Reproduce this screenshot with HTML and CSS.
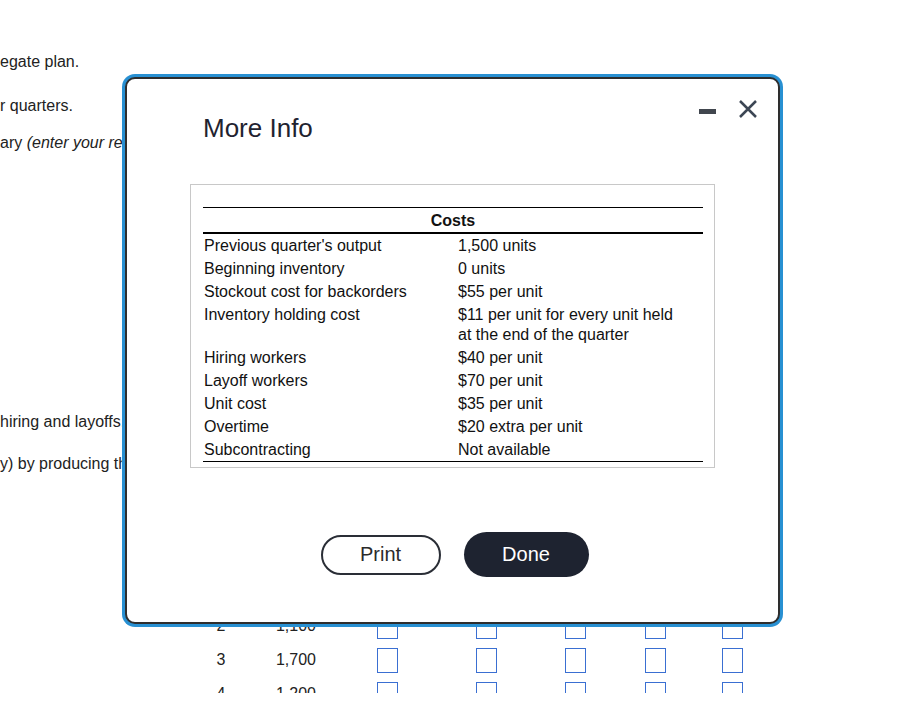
FILE: index.html
```html
<!DOCTYPE html>
<html lang="en">
<head>
<meta charset="utf-8">
<title>More Info</title>
<link rel="stylesheet" href="styles.css">
</head>
<body>
<div class="page">
  <div class="bg">
    <p class="l1">egate plan.</p>
    <p class="l2">r quarters.</p>
    <p class="l3">ary <i>(enter your responses as whole numbers)</i>.</p>
    <p class="l4">hiring and layoffs.</p>
    <p class="l5">y) by producing the demand in each quarter.</p>
    <div class="qrows">
      <div class="qrow"><span class="q">2</span><span class="d">1,100</span><span class="box c1"></span><span class="box c2"></span><span class="box c3"></span><span class="box c4"></span><span class="box c5"></span></div>
      <div class="qrow"><span class="q">3</span><span class="d">1,700</span><span class="box c1"></span><span class="box c2"></span><span class="box c3"></span><span class="box c4"></span><span class="box c5"></span></div>
      <div class="qrow"><span class="q">4</span><span class="d">1,200</span><span class="box c1"></span><span class="box c2"></span><span class="box c3"></span><span class="box c4"></span><span class="box c5"></span></div>
    </div>
  </div>

  <div class="dialog">
    <div class="dlg-head">
      <h2 class="title">More Info</h2>
      <div class="icons">
        <svg class="ico" width="18" height="18" viewBox="0 0 18 18"><rect x="0" y="9" width="17" height="5" fill="#41464e"/></svg>
        <svg class="ico" width="18" height="18" viewBox="0 0 18 18"><path d="M1 1 L17 17 M17 1 L1 17" stroke="#3c4654" stroke-width="2.5" fill="none"/></svg>
      </div>
    </div>
    <div class="info">
      <table class="costs">
        <thead>
          <tr><th colspan="2">Costs</th></tr>
        </thead>
        <tbody>
          <tr><td>Previous quarter's output</td><td>1,500 units</td></tr>
          <tr><td>Beginning inventory</td><td>0 units</td></tr>
          <tr><td>Stockout cost for backorders</td><td>$55 per unit</td></tr>
          <tr><td>Inventory holding cost</td><td>$11 per unit for every unit held<br>at the end of the quarter</td></tr>
          <tr><td>Hiring workers</td><td>$40 per unit</td></tr>
          <tr><td>Layoff workers</td><td>$70 per unit</td></tr>
          <tr><td>Unit cost</td><td>$35 per unit</td></tr>
          <tr><td>Overtime</td><td>$20 extra per unit</td></tr>
          <tr><td>Subcontracting</td><td>Not available</td></tr>
        </tbody>
      </table>
    </div>
    <div class="actions">
      <button class="btn print">Print</button>
      <button class="btn done">Done</button>
    </div>
  </div>
</div>
</body>
</html>
```

FILE: styles.css
```css
body {
  margin: 0;
  background: #fff;
  font-family: "Liberation Sans", Arial, sans-serif;
}

.page {
  position: relative;
  width: 910px;
  height: 693px;
  overflow: hidden;
}

.bg {
  padding-top: 52px;
}

.bg p {
  margin: 0;
  font-size: 16px;
  line-height: 20px;
  color: #222;
  white-space: nowrap;
}

.l2 { margin-top: 24px !important; }
.l3 { margin-top: 17px !important; }
.l4 { margin-top: 259px !important; }
.l5 { margin-top: 22px !important; }

.qrows {
  margin-top: 135px;
}

.qrow {
  display: flex;
  align-items: center;
  height: 34px;
  font-size: 16px;
  line-height: 20px;
  color: #222;
}

.q {
  width: 40px;
  margin-left: 201px;
  text-align: center;
}

.d {
  width: 75px;
  text-align: right;
}

.box {
  width: 21px;
  height: 25px;
  box-sizing: border-box;
  border: 1.5px solid #3a6fd2;
}

.c1 { margin-left: 61px; }
.c2 { margin-left: 78px; }
.c3 { margin-left: 68px; }
.c4 { margin-left: 59px; }
.c5 { margin-left: 56px; }

.dialog {
  position: absolute;
  left: 125px;
  top: 77px;
  width: 655px;
  height: 547px;
  box-sizing: border-box;
  border: 2px solid #2e2e2e;
  border-radius: 10px;
  box-shadow: 0 0 0 3px #2890d2;
  background: #fff;
  display: flex;
  flex-direction: column;
}

.dlg-head {
  display: flex;
  justify-content: space-between;
  align-items: flex-start;
  padding: 21px 21px 0 76px;
}

.title {
  margin: 13px 0 0;
  font-size: 26px;
  line-height: 30px;
  font-weight: normal;
  color: #1f2330;
}

.icons {
  display: flex;
  gap: 22px;
}

.ico {
  display: block;
}

.info {
  margin: 41px 0 0 63px;
  width: 525px;
  height: 284px;
  box-sizing: border-box;
  border: 1px solid #c8c8c8;
  padding: 22px 11px 0 12px;
}

.costs {
  width: 500px;
  border-collapse: separate;
  border-spacing: 0;
  font-size: 16px;
  color: #111;
}

.costs th {
  border-top: 1px solid #000;
  border-bottom: 2px solid #000;
  padding: 1px 0 0;
  line-height: 23px;
  font-weight: bold;
  text-align: center;
}

.costs td {
  padding: 2px 0 1px;
  line-height: 20px;
  vertical-align: top;
  text-align: left;
}

.costs td:first-child {
  width: 254px;
  padding-left: 1px;
}

.costs tbody tr:last-child td {
  border-bottom: 1px solid #000;
}

.actions {
  display: flex;
  justify-content: center;
  align-items: center;
  gap: 23px;
  margin-top: 64px;
  padding-left: 4px;
}

.btn {
  font-family: "Liberation Sans", Arial, sans-serif;
  font-size: 20px;
  box-sizing: border-box;
  border-radius: 999px;
  padding: 0;
}

.print {
  width: 120px;
  height: 40px;
  border: 2px solid #2a2e36;
  background: #fff;
  color: #2b2b2b;
}

.done {
  width: 125px;
  height: 45px;
  border: none;
  background: #1e2330;
  color: #fff;
}
```
